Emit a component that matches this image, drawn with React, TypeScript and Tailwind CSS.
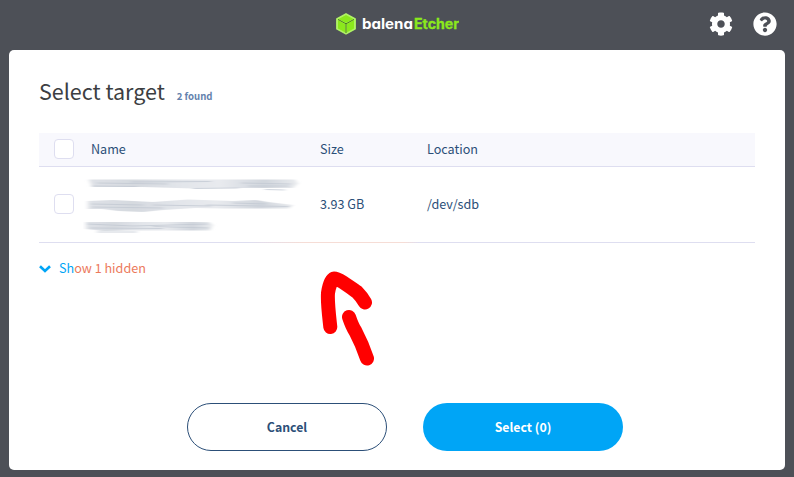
import React from "react";
import { FaCog, FaQuestionCircle } from "react-icons/fa";

function Logo() {
  return (
    <div className="flex items-center">
      <svg width="22" height="24" viewBox="0 0 22 24" aria-hidden="true">
        <path d="M11 1.8 20.2 6.8V16.9L11 22 1.8 16.9V6.8Z" fill="#b0f266" stroke="#b0f266" strokeWidth="1.4" strokeLinejoin="round" />
        <path d="M11 3 18.4 6.9 11 11 3.6 6.9Z" fill="#8be81c" />
        <path d="M3 8 10.4 12.2V20.6L3 16.5Z" fill="#8be81c" />
        <path d="M19 8 11.6 12.2V20.6L19 16.5Z" fill="#8be81c" />
        <path d="M3 7.4 11 11.8 19 7.4M11 11.8V21" fill="none" stroke="#4a7d1c" strokeWidth="1" />
      </svg>
      <svg width="102" height="24" viewBox="0 0 102 24" className="font-['Inter',sans-serif] font-bold [font-feature-settings:'cv11']">
        <text x="5" y="17" fontSize="14" textLength="51" lengthAdjust="spacingAndGlyphs" fill="#ffffff">balena</text>
        <text x="57" y="17" fontSize="14" textLength="45" lengthAdjust="spacingAndGlyphs" fill="#8be81c" stroke="#8be81c" strokeWidth=".3">Etcher</text>
      </svg>
    </div>
  );
}

function Checkbox() {
  return <span className="block size-5 rounded border border-[#dedef0] bg-white" />;
}

function Arrow() {
  return (
    <svg className="absolute left-[310px] top-[260px] blur-[0.4px]" width="80" height="115" viewBox="0 0 80 115" fill="none" stroke="#ff0000" strokeWidth="14" strokeLinecap="round" strokeLinejoin="round">
      <path d="M20.300 67C19 55 17.300 42 18 33C19 26 21.500 19.500 24 18.500C29 18.500 40 27 47 32C50 35 53 39 55 42.500" />
      <path d="M39 57C41 63 42.500 67 45.500 71.500C50 80 53.500 88 57 98.500" />
    </svg>
  );
}

function RedactedName() {
  return (
    <svg width="222" height="62" viewBox="0 0 222 62" className="-ml-2" fill="none" aria-hidden="true">
      <defs>
        <filter id="soft" x="-5%" y="-30%" width="110%" height="160%">
          <feGaussianBlur stdDeviation="2.2 0.6" />
        </filter>
        <linearGradient id="smear" x1="0" x2="1">
          <stop offset="0" stopColor="#dfe2e7" />
          <stop offset=".22" stopColor="#d5d9df" />
          <stop offset=".43" stopColor="#e2e5ea" />
          <stop offset=".63" stopColor="#e8eaee" />
          <stop offset=".84" stopColor="#d1d6dd" />
          <stop offset="1" stopColor="#e9ebee" />
        </linearGradient>
      </defs>
      <g filter="url(#soft)" transform="translate(0 1)">
        <path d="M6 5.500H212L215 9.500 210 14H140L110 14.500 60 13H9Z" fill="url(#smear)" />
        <path d="M5 27 30 26 70 28 105 25.500 150 27 173 26 185 28 210 31 206 34.500H140L112 34 80 36 60 38 35 37 20 35H5Z" fill="url(#smear)" />
        <path d="M3 48H126L130 51 127 56.500H45L20 57 3 55Z" fill="url(#smear)" />
        <path d="M9 12 54 12.500M14 9 85 10M48 8 128 7.500M158 9 208 10M165 12 206 12M110 14.500 156 14M182 15.500 202 16" stroke="#c3c9d3" strokeWidth=".8" />
        <path d="M9 33 80 34M8 30 60 31M70 31 128 32M123 31 206 32.500M150 29 184 30" stroke="#c3c9d3" strokeWidth=".8" />
        <path d="M4 50 50 52 125 50M7 54 80 54.500M70 52.500 126 54M14 58 54 58" stroke="#c3c9d3" strokeWidth=".8" />
      </g>
    </svg>
  );
}

const columns = "grid grid-cols-[52px_229px_107px_1fr] items-center";

export default function App() {
  return (
    <div className="relative flex h-[477px] w-[794px] flex-col overflow-hidden bg-[#4d5057] px-[9px] font-['Noto_Sans_CJK_SC',sans-serif] text-[12.6px] leading-5 text-[#2c4f78]">
      <header className="grid h-[50px] shrink-0 grid-cols-[1fr_auto_1fr] items-center pb-0.5 text-white">
        <span />
        <Logo />
        <div className="flex items-center justify-end gap-5 pr-2">
          <button aria-label="Settings"><FaCog size={24} /></button>
          <button aria-label="Help"><FaQuestionCircle size={24} /></button>
        </div>
      </header>

      <main className="flex h-[420px] shrink-0 flex-col rounded-[5px] bg-white px-[30px]">
        <div className="flex h-[83px] items-baseline gap-3 pt-[24px]">
          <h1 className="text-[21.5px] leading-[34px] text-[#3c3e42]">Select target</h1>
          <span className="text-[9.6px] font-bold text-[#6482ad]">2 found</span>
        </div>

        <section>
          <div className={`${columns} h-[34px] border-b border-[#dedef0] bg-[#f8f8fd] pb-px`}>
            <span className="pl-[15px]"><Checkbox /></span>
            <span>Name</span>
            <span>Size</span>
            <span>Location</span>
          </div>
          <div className={`${columns} h-[75px] pb-px`}>
            <span className="pl-[15px]"><Checkbox /></span>
            <RedactedName />
            <span>3.93 GB</span>
            <span>/dev/sdb</span>
          </div>
          <div className="h-px bg-[linear-gradient(to_right,#dedef0_210px,#f6ddd6_265px,#f6ddd6_365px,#dedef0_380px)]" />
        </section>

        <button className="mt-[15px] flex items-center gap-2 self-start text-[#ec7a5c]">
          <svg width="12" height="8" viewBox="0 0 12 8" className="mt-px" fill="none" stroke="#00a5f6" strokeWidth="2.6">
            <path d="M1 1.2 6 6 11 1.2" />
          </svg>
          <span><span className="text-[#00a5f6]">Sh</span>ow 1 hidden</span>
        </button>

        <footer className="mt-auto flex justify-center gap-9 pb-[19px] pl-4 text-[12.3px] font-bold">
          <button className="h-12 w-[200px] rounded-full border border-[#2c4f78]">Cancel</button>
          <button className="h-12 w-[200px] rounded-full bg-[#00a5f6] text-white">Select (0)</button>
        </footer>
      </main>
      <Arrow />
    </div>
  );
}
